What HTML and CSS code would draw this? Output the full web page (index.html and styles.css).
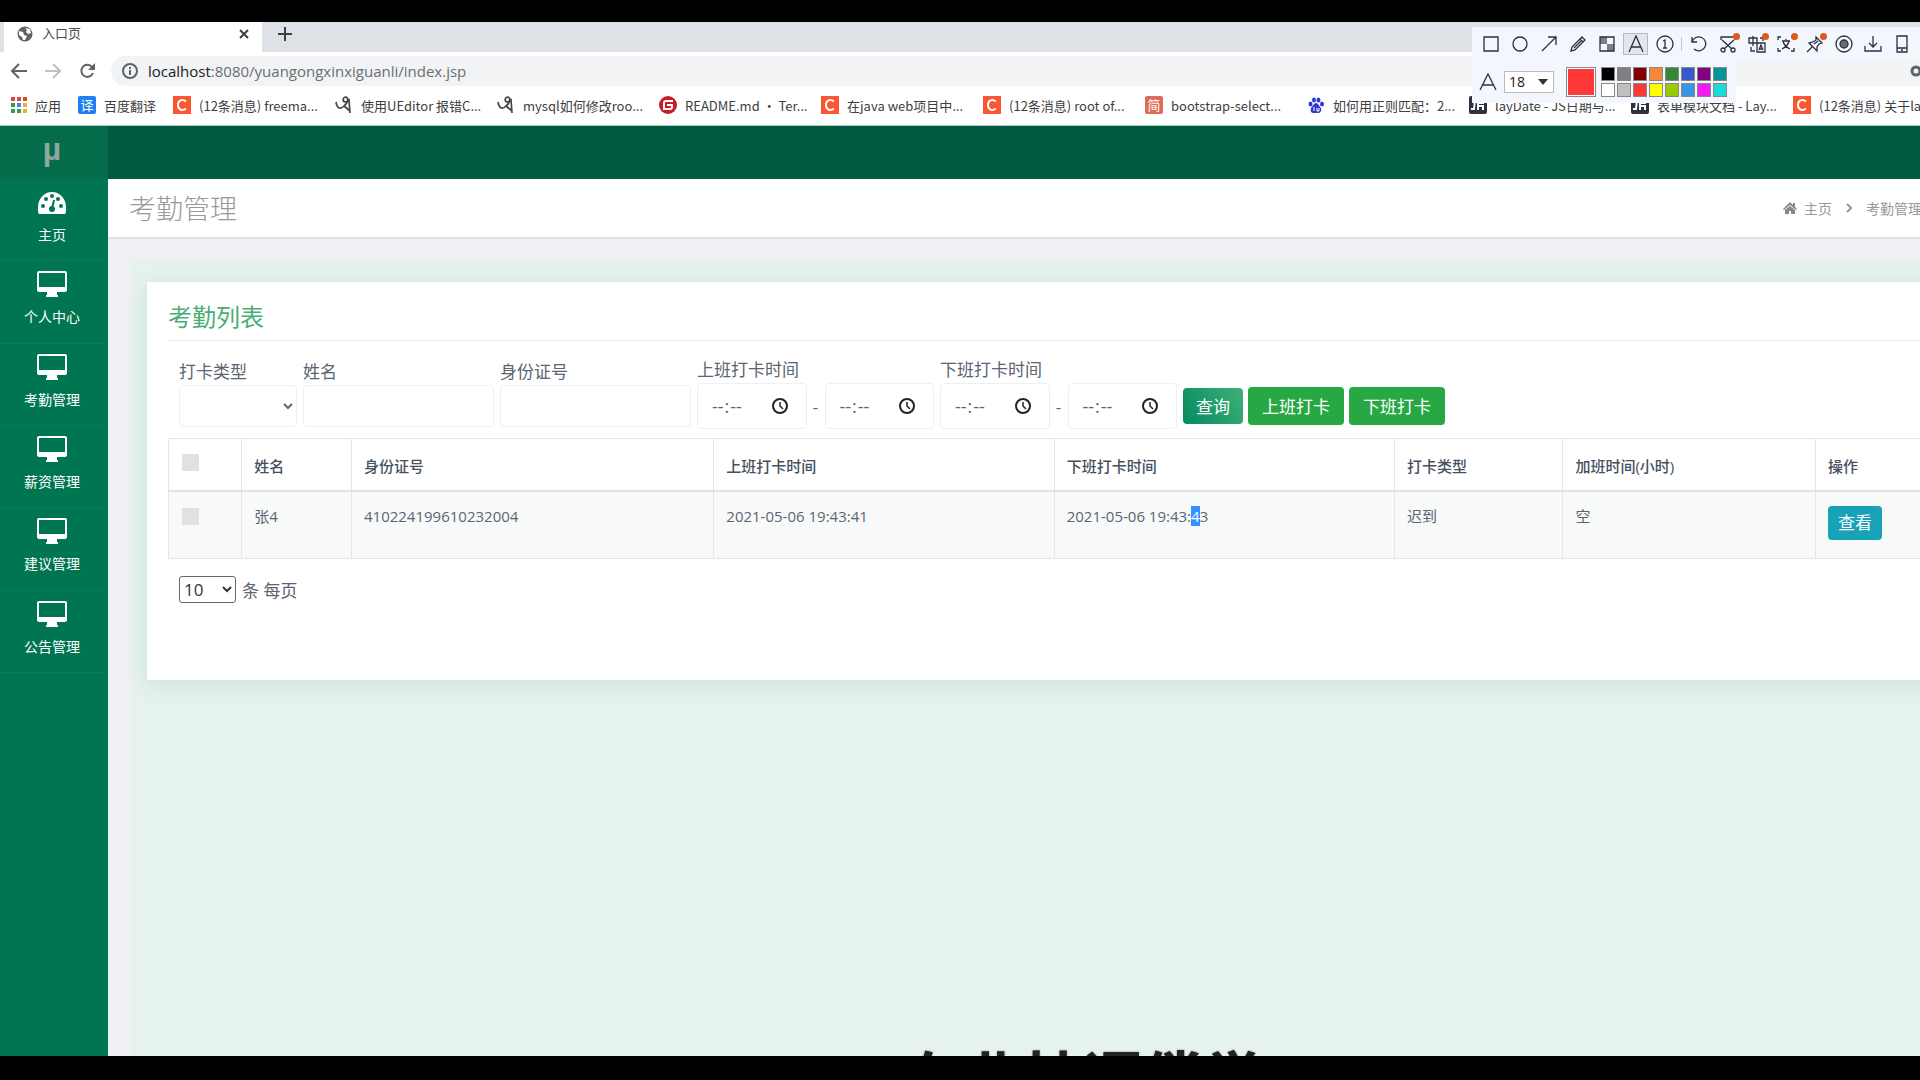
FILE: index.html
```html
<!DOCTYPE html>
<html lang="zh-CN">
<head>
  <meta charset="UTF-8" />
  <meta name="viewport" content="width=device-width, initial-scale=1" />
  <title>入口页</title>
  <link rel="stylesheet" href="styles.css">
</head>
<body>

  <!-- icons used more than once -->
  <svg class="defs" aria-hidden="true">
    <symbol id="monitor" viewBox="0 0 30 26">
      <path fill="#fff" fill-rule="evenodd" d="M2 0h26a2 2 0 0 1 2 2v17a2 2 0 0 1-2 2h-8v3h1v2H9v-2h1v-3H2a2 2 0 0 1-2-2V2a2 2 0 0 1 2-2zm0 2v14h26V2z"/>
    </symbol>
    <symbol id="csdn" viewBox="0 0 18 18">
      <rect width="18" height="18" fill="#fc5531"/>
      <path d="M13 5.500C9 2.500 5 4.500 5 9s4 6.500 8 3.500" fill="none" stroke="#fff" stroke-width="2"/>
    </symbol>
    <symbol id="ued" viewBox="0 0 18 18">
      <path d="M1 6c1 6 4 8 8 4 4-3 5-8 2-9-3 0-4 4-1 5 2 0 3-1 4-2l1 13M9 10l6 5" fill="none" stroke="#444" stroke-width="1.700"/>
    </symbol>
    <symbol id="layui" viewBox="0 0 18 18">
      <rect width="18" height="18" rx="2" fill="#2f3140"/>
      <path d="M6 4L5 13H2M9 14V7h6M9 10h5v4" fill="none" stroke="#fff" stroke-width="2"/>
    </symbol>
    <symbol id="clock" viewBox="0 0 16 16">
      <circle cx="8" cy="8" r="7" fill="none" stroke="#222" stroke-width="2"/>
      <path d="M8 4v4l3 3" fill="none" stroke="#222" stroke-width="1.500"/>
    </symbol>
  </svg>

  <div class="bar top"></div>

  <header class="browser">
    <div class="tabs">
      <div class="tab">
        <svg width="16" height="16" viewBox="0 0 16 16"><circle cx="8" cy="8" r="7.500" fill="#5f6368"/><path d="M2 5l4 1 1 3 3 1-2 4-2 0-1-3-3-2zM8 2l5 1 1 4-3 1-2-2 1-2z" fill="#fff"/></svg>
        <span class="tab-name">入口页</span>
        <button class="icon-btn" aria-label="关闭"><svg width="10" height="10" viewBox="0 0 10 10"><path d="M1 1l8 8M9 1l-8 8" stroke="#3c4043" stroke-width="2"/></svg></button>
      </div>
      <button class="icon-btn new-tab" aria-label="新标签页"><svg width="14" height="14" viewBox="0 0 14 14"><path d="M7 0v14M0 7h14" stroke="#3c4043" stroke-width="2"/></svg></button>
    </div>

    <div class="toolbar">
      <button class="icon-btn" aria-label="后退"><svg width="16" height="16" viewBox="0 0 16 16"><path d="M16 8H2M8 1L1 8l7 7" fill="none" stroke="#5f6368" stroke-width="2"/></svg></button>
      <button class="icon-btn" aria-label="前进"><svg width="16" height="16" viewBox="0 0 16 16"><path d="M0 8h14M8 1l7 7-7 7" fill="none" stroke="#bdc1c6" stroke-width="2"/></svg></button>
      <button class="icon-btn" aria-label="刷新"><svg width="16" height="16" viewBox="0 0 16 16"><path d="M14 10a6 6 0 1 1-1-6l1 2" fill="none" stroke="#5f6368" stroke-width="2"/><path d="M16 0v7H9z" fill="#5f6368"/></svg></button>
      <div class="address">
        <svg width="16" height="16" viewBox="0 0 16 16"><circle cx="8" cy="8" r="7" fill="none" stroke="#5f6368" stroke-width="2"/><path d="M8 7v5M8 4v2" stroke="#5f6368" stroke-width="2"/></svg>
        <span class="url"><b>localhost</b>:8080/yuangongxinxiguanli/index.jsp</span>
        <svg class="key" width="20" height="12" viewBox="0 0 20 12"><path d="M9 6h11v3" fill="none" stroke="#5f6368" stroke-width="3"/><circle cx="6" cy="6" r="4" fill="none" stroke="#5f6368" stroke-width="3"/></svg>
      </div>
    </div>

    <nav class="bookmarks">
      <a href="#" class="short"><svg width="16" height="16" viewBox="0 0 16 16"><path d="M0 0h4v4H0zM6 0h4v4H6zM12 0h4v4h-4z" fill="#d9493a"/><path d="M0 6h4v4H0zM0 12h4v4H0zM6 12h4v4H6z" fill="#2f9b57"/><path d="M6 6h4v4H6z" fill="#4285f4"/><path d="M12 6h4v4h-4zM12 12h4v4h-4z" fill="#eab030"/></svg><span>应用</span></a>
      <a href="#" class="short"><i class="site blue">译</i><span>百度翻译</span></a>
      <a href="#"><svg><use href="#csdn"/></svg><span>(12条消息) freema...</span></a>
      <a href="#"><svg><use href="#ued"/></svg><span>使用UEditor 报错C...</span></a>
      <a href="#"><svg><use href="#ued"/></svg><span>mysql如何修改roo...</span></a>
      <a href="#"><svg viewBox="0 0 18 18"><circle cx="9" cy="9" r="9" fill="#c71d23"/><path d="M14 5H7Q5 5 5 7v6h6q2 0 2-2V9H8" fill="none" stroke="#fff" stroke-width="2"/></svg><span>README.md · Ter...</span></a>
      <a href="#"><svg><use href="#csdn"/></svg><span>在java web项目中...</span></a>
      <a href="#"><svg><use href="#csdn"/></svg><span>(12条消息) root of...</span></a>
      <a href="#"><i class="site red">简</i><span>bootstrap-select...</span></a>
      <a href="#"><svg viewBox="0 0 18 18" fill="#3138d6"><ellipse cx="3.500" cy="8" rx="2" ry="2.500"/><ellipse cx="7" cy="4" rx="2" ry="2.500"/><ellipse cx="11.500" cy="4" rx="2" ry="2.500"/><ellipse cx="15" cy="8" rx="2" ry="2.500"/><path d="M9 7c2 0 3 3 5 5 1 3-1 5-3 5H7c-3 0-4-2-3-5 2-2 3-5 5-5z"/><path d="M7 11v4M10 12v3h2v-3" fill="none" stroke="#fff"/></svg><span>如何用正则匹配：2...</span></a>
      <a href="#"><svg><use href="#layui"/></svg><span>layDate - JS日期与...</span></a>
      <a href="#"><svg><use href="#layui"/></svg><span>表单模块文档 - Lay...</span></a>
      <a href="#"><svg><use href="#csdn"/></svg><span>(12条消息) 关于la...</span></a>
    </nav>
  </header>

  <div class="app">
    <aside class="sidebar">
      <a href="#" class="logo">µ</a>
      <ul class="menu">
        <li><a href="#"><svg viewBox="0 0 30 26"><path d="M2 25q-1 0-1-3v-4a14 15 0 0 1 28 0v4q0 3-1 3z" fill="#fff"/><g fill="#007551"><circle cx="6" cy="17" r="2"/><circle cx="9" cy="10" r="2"/><circle cx="15" cy="7" r="2"/><circle cx="21" cy="10" r="2"/><circle cx="24" cy="17" r="2"/><circle cx="15" cy="20" r="3"/></g><path d="M15 20l2-9" stroke="#007551" stroke-width="2"/></svg>主页</a></li>
        <li><a href="#"><svg><use href="#monitor"/></svg>个人中心</a></li>
        <li><a href="#"><svg><use href="#monitor"/></svg>考勤管理</a></li>
        <li><a href="#"><svg><use href="#monitor"/></svg>薪资管理</a></li>
        <li><a href="#"><svg><use href="#monitor"/></svg>建议管理</a></li>
        <li><a href="#"><svg><use href="#monitor"/></svg>公告管理</a></li>
      </ul>
    </aside>

    <main class="main">
      <div class="navbar"></div>

      <div class="page-head">
        <h1>考勤管理</h1>
        <nav class="crumbs">
          <a href="#"><svg width="14" height="12" viewBox="0 0 14 12"><path d="M7 0l3 3V1h2v4l2 2-1 1-6-5-6 5-1-1z" fill="#888"/><path d="M7 4l5 4v4H8V9H6v3H2V8z" fill="#888"/></svg>主页</a>
          <svg width="6" height="10" viewBox="0 0 6 10"><path d="M1 1l4 4-4 4" fill="none" stroke="#999" stroke-width="2"/></svg>
          <span>考勤管理</span>
        </nav>
      </div>

      <div class="content">
        <section class="card">
          <h2>考勤列表</h2>

          <form class="filters">
            <div class="field type">
              <label for="type">打卡类型</label>
              <div class="control"><select id="type"><option></option></select></div>
            </div>
            <div class="field">
              <label for="name">姓名</label>
              <div class="control"><input type="text" id="name"></div>
            </div>
            <div class="field">
              <label for="idcard">身份证号</label>
              <div class="control"><input type="text" id="idcard"></div>
            </div>
            <div class="field range">
              <label for="onStart">上班打卡时间</label>
              <div class="control">
                <span class="time"><input type="time" id="onStart"><svg><use href="#clock"/></svg></span>
                <span class="dash">-</span>
                <span class="time"><input type="time" aria-label="上班打卡时间止"><svg><use href="#clock"/></svg></span>
              </div>
            </div>
            <div class="field range">
              <label for="offStart">下班打卡时间</label>
              <div class="control">
                <span class="time"><input type="time" id="offStart"><svg><use href="#clock"/></svg></span>
                <span class="dash">-</span>
                <span class="time"><input type="time" aria-label="下班打卡时间止"><svg><use href="#clock"/></svg></span>
              </div>
            </div>
            <div class="control actions">
              <button type="button" class="btn search">查询</button>
              <button type="button" class="btn success">上班打卡</button>
              <button type="button" class="btn success">下班打卡</button>
            </div>
          </form>

          <table>
            <colgroup>
              <col class="c-check"><col class="c-name"><col class="c-id"><col class="c-time"><col class="c-time"><col class="c-type"><col class="c-extra"><col>
            </colgroup>
            <thead>
              <tr>
                <th><input type="checkbox" aria-label="全选"></th>
                <th>姓名</th>
                <th>身份证号</th>
                <th>上班打卡时间</th>
                <th>下班打卡时间</th>
                <th>打卡类型</th>
                <th>加班时间(小时)</th>
                <th>操作</th>
              </tr>
            </thead>
            <tbody>
              <tr>
                <td><input type="checkbox" aria-label="选择"></td>
                <td>张4</td>
                <td>410224199610232004</td>
                <td>2021-05-06 19:43:41</td>
                <td>2021-05-06 19:43:<span class="picked">4</span>3</td>
                <td>迟到</td>
                <td>空</td>
                <td><button type="button" class="btn info">查看</button></td>
              </tr>
            </tbody>
          </table>

          <div class="pager">
            <select id="pageSize"><option>10</option></select>
            <label for="pageSize">条 每页</label>
          </div>
        </section>
      </div>
    </main>

    <p class="caption">在业扶逻偿学</p>
  </div>

  <div class="bar bottom"></div>

  <!-- screen capture toolbar -->
  <div class="capture">
    <div class="tools">
      <button aria-label="矩形"><svg viewBox="0 0 18 18"><path d="M2 2h14v14H2z"/></svg></button>
      <button aria-label="椭圆"><svg viewBox="0 0 18 18"><circle cx="9" cy="9" r="7"/></svg></button>
      <button aria-label="箭头"><svg viewBox="0 0 18 18"><path d="M2 16L16 2M8 2h8v8"/></svg></button>
      <button aria-label="画笔"><svg viewBox="0 0 18 18"><path d="M2 16l1-4L13 2l3 3L6 15zM11 4l3 3M5 13l7-7"/></svg></button>
      <button aria-label="马赛克"><svg viewBox="0 0 18 18"><path d="M2 2h7v7h7v7H9V9H2z" fill="#7a7f8e" stroke="none"/><path d="M2 2h14v14H2z"/></svg></button>
      <button aria-label="文字" class="on"><svg viewBox="0 0 18 18"><path d="M2 17L9 1l7 16M4 12h10"/></svg></button>
      <button aria-label="序号"><svg viewBox="0 0 18 18"><circle cx="9" cy="9" r="8"/><path d="M7 6l2-1v8M7 13h4"/></svg></button>
      <i class="sep"></i>
      <button aria-label="撤销"><svg viewBox="0 0 18 18"><path d="M2 2v5h5M2 7a7 7 0 1 1 2 7"/></svg></button>
      <button aria-label="截图" class="dot"><svg viewBox="0 0 18 18"><path d="M2 5V2h14v3M3 5l10 9M15 5L5 14"/><circle cx="4" cy="15" r="2"/><circle cx="14" cy="15" r="2"/></svg></button>
      <button aria-label="翻译" class="dot"><svg viewBox="0 0 18 18"><path d="M1 3h8v5H1zM5 1v10M9 8h8v9H9zM11 15l2-5 2 5M12 14h3M3 12v4h4M12 3h3v3"/></svg></button>
      <button aria-label="识别文字" class="dot"><svg viewBox="0 0 18 18"><path d="M1 5V2h3M14 2h3v3M1 13v3h3M14 16h3v-3M5 6h8M9 4v2M12 6q-1 5-7 8M6 6q1 5 7 8"/></svg></button>
      <button aria-label="钉住" class="dot"><svg viewBox="0 0 18 18"><path d="M10 2l6 6-3 1-2 3v4L3 8l4-1 3-2zM6 12l-5 5M8 9l4-3"/></svg></button>
      <button aria-label="录制"><svg viewBox="0 0 18 18"><circle cx="9" cy="9" r="8"/><circle cx="9" cy="9" r="4" fill="#666b7a"/></svg></button>
      <button aria-label="保存"><svg viewBox="0 0 18 18"><path d="M1 11v5h16v-5M9 1v11M5 8l4 4 4-4"/></svg></button>
      <button aria-label="发送到手机"><svg viewBox="0 0 18 18"><path d="M4 1h10v16H4zM4 13h10M8 15h2"/></svg></button>
    </div>
    <div class="options">
      <svg class="letter" viewBox="0 0 18 18"><path d="M1 17L9 1l8 16M4 12h10"/></svg>
      <select aria-label="字号"><option>18</option></select>
      <span class="current"></span>
      <div class="palette">
        <i class="black"></i><i class="gray"></i><i class="maroon"></i><i class="orange"></i><i class="green"></i><i class="navy"></i><i class="purple"></i><i class="teal"></i>
        <i class="white"></i><i class="silver"></i><i class="bright"></i><i class="yellow"></i><i class="lime"></i><i class="sky"></i><i class="pink"></i><i class="cyan"></i>
      </div>
    </div>
  </div>

</body>
</html>
```
FILE: styles.css
```css
* {
  box-sizing: border-box;
}
body {
  margin: 0;
  height: 100vh;
  display: flex;
  flex-direction: column;
  position: relative;
  overflow: hidden;
  font-family: "Open Sans", "Noto Sans CJK SC", sans-serif;
  font-size: 15px;
  color: #5b6572;
  background: #fff;
}
button, input, select {
  font: inherit;
  color: inherit;
}
a {
  color: inherit;
  text-decoration: none;
}
.defs {
  position: absolute;
  width: 0;
  height: 0;
}
.bar {
  flex: none;
  background: #000;
}
.bar.top {
  height: 22px;
}
.bar.bottom {
  height: 24px;
}

/* browser window */
.browser {
  flex: none;
  background: #fff;
}
.icon-btn {
  display: flex;
  padding: 0;
  border: none;
  background: none;
}
.tabs {
  display: flex;
  align-items: center;
  height: 30px;
  padding-left: 4px;
  background: #dee1e6;
}
.tab {
  display: flex;
  align-items: center;
  gap: 9px;
  width: 258px;
  height: 30px;
  padding: 0 13px 6px 13px;
  background: #fff;
  font-size: 13px;
  color: #45494d;
}
.tab-name {
  flex: 1;
  padding-bottom: 3px;
}
.new-tab {
  align-self: stretch;
  flex: 1;
  align-items: center;
  padding: 0 0 6px 16px;
}
.toolbar {
  display: flex;
  align-items: center;
  gap: 18px;
  height: 37px;
  padding: 4px 0 4px 11px;
}
.address {
  flex: 1;
  display: flex;
  align-items: center;
  gap: 10px;
  height: 30px;
  margin-left: -2px;
  padding-left: 11px;
  border-radius: 15px 0 0 15px;
  background: #f1f3f4;
  overflow: hidden;
}
.url {
  flex: 1;
  font-size: 15px;
  color: #6b6f74;
}
.url b {
  font-weight: normal;
  color: #202124;
}
.key {
  margin-right: -10px;
}
.bookmarks {
  display: flex;
  gap: 16px;
  height: 37px;
  padding: 0 0 4px 11px;
  border-bottom: 1px solid #a9cfc0;
  overflow: hidden;
}
.bookmarks a {
  flex: none;
  display: flex;
  align-items: center;
  gap: 8px;
  font-family: "Noto Sans CJK SC", sans-serif;
  font-size: 13px;
  color: #3c4043;
  white-space: nowrap;
}
.bookmarks svg {
  width: 18px;
  height: 18px;
}
.bookmarks a span {
  width: 120px;
}
.bookmarks .short {
  padding-right: 1px;
}
.bookmarks .short span {
  width: auto;
}
.bookmarks .short svg {
  width: 16px;
  height: 16px;
}
.site {
  width: 18px;
  border-radius: 2px;
  font-style: normal;
  line-height: 18px;
  text-align: center;
  color: #fff;
}
.site.blue {
  background: #2080f0;
}
.site.red {
  background: #e06a5a;
}

/* application */
.app {
  flex: 1;
  display: flex;
  position: relative;
  min-height: 0;
  overflow: hidden;
  background: #eff0f4;
}
.sidebar {
  flex: none;
  width: 108px;
  background: #007551;
}
.logo {
  display: block;
  height: 53px;
  padding-right: 4px;
  background: #046b4b;
  font-family: "Liberation Sans", sans-serif;
  font-size: 32px;
  font-weight: bold;
  line-height: 46px;
  text-align: center;
  color: #8ea69d;
}
.menu {
  display: grid;
  grid-auto-rows: 1fr;
  height: 494px;
  margin: 0;
  padding: 0;
  list-style: none;
}
.menu li {
  border-bottom: 1px solid #0a7e5a;
}
.menu a {
  display: flex;
  flex-direction: column;
  align-items: center;
  gap: 9px;
  padding: 10px 4px 0 0;
  font-size: 14px;
  line-height: 22px;
  color: #fff;
}
.menu svg {
  width: 30px;
  height: 26px;
}
.main {
  flex: 1;
  display: flex;
  flex-direction: column;
  min-width: 0;
}
.navbar {
  flex: none;
  height: 53px;
  background: #005b41;
}
.page-head {
  flex: none;
  display: flex;
  justify-content: space-between;
  align-items: center;
  height: 60px;
  padding-left: 21px;
  border-bottom: 2px solid #dfe0e2;
  background: #fff;
  color: #999;
}
.page-head h1 {
  margin: 0;
  padding-bottom: 2px;
  font-size: 27px;
  font-weight: 300;
}
.crumbs {
  display: flex;
  align-items: center;
  gap: 14px;
  margin-right: -2px;
  font-size: 14px;
}
.crumbs a {
  display: flex;
  align-items: center;
  gap: 7px;
}

/* the list is wider than the window and runs off the right edge */
.content {
  flex: 1;
  width: calc(100% + 76px);
  margin: 22px 0 0 24px;
  padding: 21px 0 0 15px;
  background: #e6f3ec;
  box-shadow: 0 0 6px #e6f3ec;
}
.card {
  height: 398px;
  padding: 16px 21px;
  background: #fff;
  box-shadow: 0 4px 20px rgba(90, 130, 150, 0.18);
}
.card h2 {
  margin: 0 0 17px;
  padding-bottom: 4px;
  border-bottom: 1px solid #e9ecef;
  font-size: 24px;
  font-weight: normal;
  line-height: 38px;
  color: #4bad74;
}
.filters {
  display: flex;
  align-items: flex-end;
  gap: 6px;
  margin-bottom: 8px;
  padding-left: 11px;
  font-size: 17px;
}
.field label {
  display: block;
  margin-bottom: -2px;
  line-height: 24px;
}
.field.range label {
  margin-bottom: 0;
}
.control {
  display: flex;
  align-items: center;
  gap: 5px;
  height: 48px;
}
.filters input, .filters select {
  width: 100%;
  height: 42px;
  border: 1px solid #eaf1f0;
  border-radius: 4px;
  background: #fff;
}
.field {
  width: 191px;
}
.field.type {
  width: 118px;
}
.field.range {
  width: 237px;
}
.time {
  flex: 1;
  min-width: 0;
  position: relative;
}
.filters .time input {
  display: block;
  height: 46px;
  padding: 0 0 0 13px;
  font-size: 18px;
}
.time svg {
  position: absolute;
  top: 15px;
  right: 19px;
  width: 16px;
  height: 16px;
  pointer-events: none;
}
.time input::-webkit-calendar-picker-indicator {
  margin: 0;
  opacity: 0;
}
.time input::-webkit-datetime-edit-ampm-field {
  display: none;
}
.dash {
  width: 8px;
  text-align: center;
}
.btn {
  flex: none;
  border: none;
  border-radius: 4px;
  font-size: 17px;
  color: #fff;
}
.btn.search {
  height: 36px;
  padding: 0 13px 2px;
  background: linear-gradient(60deg, #048a60, #3fb078);
}
.btn.success {
  height: 38px;
  padding: 0 14px 2px;
  background: #28a745;
}
.btn.info {
  height: 34px;
  margin-top: 2px;
  padding: 0 10px;
  background: #17a2b8;
}

table {
  width: 100%;
  table-layout: fixed;
  border-collapse: collapse;
}
th, td {
  border: 1px solid #e4e6e8;
  padding: 12px;
  text-align: left;
  vertical-align: top;
  line-height: 24px;
}
th {
  padding-top: 15px;
  border-bottom: 2px solid #dee2e6;
  font-weight: 500;
  color: #45505c;
}
td {
  height: 67px;
  background: #f8f9f9;
}
.c-check { width: 4%; }
.c-name { width: 6%; }
.c-id { width: 19.8%; }
.c-time { width: 18.6%; }
.c-type { width: 9.2%; }
.c-extra { width: 13.8%; }
table input {
  appearance: none;
  display: block;
  width: 17px;
  height: 17px;
  margin: 4px 1px;
  background: #dfe1e4;
}
th input {
  margin-top: 0;
}
.picked {
  background: #3390ff;
  color: #fff;
}
.pager {
  display: flex;
  align-items: center;
  gap: 6px;
  padding: 17px 11px 0;
  font-size: 17px;
}
.pager select {
  width: 57px;
  height: 27px;
  border: 1px solid #666;
  border-radius: 3px;
  background: #fff;
  color: #333;
}
.caption {
  position: absolute;
  bottom: -68px;
  left: 0;
  right: 0;
  margin: 0;
  padding-left: 246px;
  font-size: 60px;
  font-weight: bold;
  line-height: 90px;
  text-align: center;
  color: #222;
  text-shadow: 0 0 2px #777;
}

/* capture overlay */
.capture {
  position: absolute;
  top: 27px;
  right: 0;
  width: 448px;
}
.tools {
  display: flex;
  align-items: center;
  height: 33px;
  padding-left: 4px;
  background: #f3f6fd;
}
.tools button {
  position: relative;
  display: flex;
  justify-content: center;
  align-items: center;
  width: 29px;
  height: 22px;
  padding: 0;
  border: none;
  background: none;
}
.tools svg, .letter {
  width: 18px;
  height: 18px;
  fill: none;
  stroke: #2c303c;
  stroke-width: 1.3;
}
.tools .on {
  width: 25px;
  margin: 0 2px;
  background: #e3e6ec;
  box-shadow: inset 0 0 0 1px #b5b8bf;
}
.tools .dot::after {
  content: "";
  position: absolute;
  top: 0;
  right: 2px;
  width: 7px;
  height: 7px;
  border-radius: 50%;
  background: #dd5a1d;
}
.sep {
  width: 1px;
  height: 14px;
  margin: 0 2px;
  background: #c5c8d0;
}
.options {
  display: flex;
  align-items: center;
  width: 264px;
  height: 43px;
  padding-left: 7px;
  background: #f3f6fd;
}
.options select {
  appearance: none;
  width: 50px;
  height: 22px;
  margin: 0 12px 0 7px;
  padding: 0 4px;
  border: 1px solid #bbb;
  background: #fff url("data:image/svg+xml,%3Csvg xmlns='http://www.w3.org/2000/svg' width='10' height='6'%3E%3Cpath d='M0 0h10L5 6z' fill='%23333'/%3E%3C/svg%3E") no-repeat right 5px center;
  font-size: 14px;
  line-height: 20px;
  color: #222;
}
.current {
  width: 30px;
  height: 30px;
  margin-right: 5px;
  border: 1px solid #888;
  outline: 1px solid #fff;
  outline-offset: -2px;
  background: #ff3838;
}
.palette {
  display: grid;
  grid-template-columns: repeat(8, 14px);
  gap: 2px;
}
.palette i {
  height: 14px;
  border: 1px solid #888;
}
.black { background: #000; }
.gray { background: #808080; }
.maroon { background: #800000; }
.orange { background: #f5883a; }
.green { background: #368736; }
.navy { background: #3858cc; }
.purple { background: #800080; }
.teal { background: #099595; }
.white { background: #fff; }
.silver { background: #c0c0c0; }
.bright { background: #fc3838; }
.yellow { background: #ffff00; }
.lime { background: #99cc00; }
.sky { background: #3894e4; }
.pink { background: #f31bf3; }
.cyan { background: #1bdcd9; }
```
